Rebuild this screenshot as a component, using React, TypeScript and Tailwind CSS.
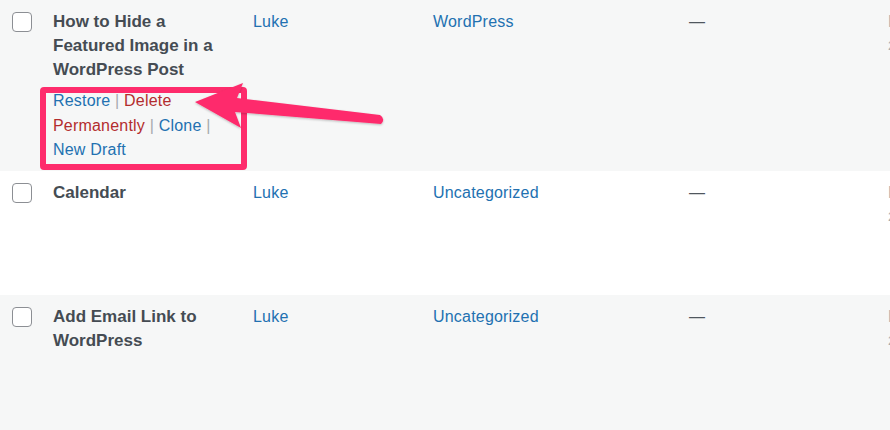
const font = { fontFamily: '"Liberation Sans", Arial, sans-serif' }

function Checkbox() {
  return <div className="w-5 h-5 rounded-[4px] border border-[#8c8f94] bg-white" />
}

function Sep() {
  return <span className="text-[#a7aaad]"> | </span>
}

interface Post {
  title: string[]
  category: string
  bg: string
  height: string
  actions?: boolean
}

const posts: Post[] = [
  {
    title: ['How to Hide a', 'Featured Image in a', 'WordPress Post'],
    category: 'WordPress',
    bg: 'bg-[#f6f7f7]',
    height: 'h-[171px]',
    actions: true,
  },
  { title: ['Calendar'], category: 'Uncategorized', bg: 'bg-white', height: 'h-[124px]' },
  {
    title: ['Add Email Link to', 'WordPress'],
    category: 'Uncategorized',
    bg: 'bg-[#f6f7f7]',
    height: 'h-[135px]',
  },
]

function Row({ post }: { post: Post }) {
  return (
    <div className={`relative flex ${post.bg} ${post.height} text-[16px] leading-[24px]`}>
      <div className="w-[53px] shrink-0 pl-3 pt-3">
        <Checkbox />
      </div>
      <div className="w-[200px] shrink-0 pt-[10px]">
        <div className="font-bold text-[17px] text-[#454c53]">
          {post.title.map((t) => (
            <div key={t}>{t}</div>
          ))}
        </div>
        {post.actions && (
          <div className="mt-[7px] text-[#2271b1] tracking-[0.2px]">
            <div>
              Restore<Sep />
              <span className="text-[#b32d2e]">Delete</span>
            </div>
            <div className="leading-[25px]">
              <span className="text-[#b32d2e]">Permanently</span>
              <Sep />
              Clone<Sep />
            </div>
            <div>New Draft</div>
          </div>
        )}
      </div>
      <div className="w-[180px] shrink-0 pt-[10px] text-[#2271b1] tracking-[0.2px]">Luke</div>
      <div className="w-[256px] shrink-0 pt-[10px] text-[#2271b1] tracking-[0.2px]">{post.category}</div>
      <div className="w-[199px] shrink-0 pt-[10px] text-[#50575e]">—</div>
      <div className="shrink-0 pt-[10px] text-[#a7aaad] whitespace-nowrap">
        <div>Last Modified</div>
        <div className="text-[13px]">2021/05/12 at 3:20 pm</div>
      </div>
    </div>
  )
}

export default function App() {
  return (
    <div className="relative w-[890px] h-[430px] overflow-hidden bg-[#f6f7f7]" style={font}>
      {posts.map((p) => (
        <Row key={p.title[0]} post={p} />
      ))}

      {/* annotation */}
      <div className="absolute left-[40px] top-[87px] w-[207px] h-[83px] border-[6px] border-[#fe2c6c] rounded-[4px]" />
      <svg className="absolute left-0 top-0" width="890" height="430">
        <defs>
          <filter id="sh" x="-10%" y="-20%" width="120%" height="150%">
            <feDropShadow dx="0" dy="1" stdDeviation="1" floodColor="#000" floodOpacity="0.25" />
          </filter>
        </defs>
        <path
          d="M195,102 L243,83 L237,98 L380,115 Q386,119 381,124 L235,112 L241,128 Z"
          fill="#fe2c6c"
          filter="url(#sh)"
        />
      </svg>
    </div>
  )
}
